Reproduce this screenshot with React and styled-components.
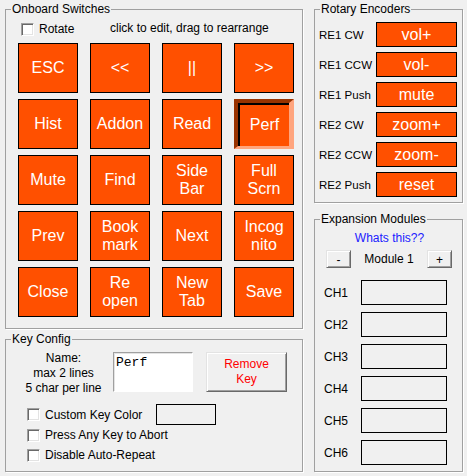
import React from "react";
import styled, { createGlobalStyle, css } from "styled-components";

const Global = createGlobalStyle`
  html, body { margin: 0; padding: 0; background: #f0f0f0; }
  body { font-family: "Liberation Sans", Arial, sans-serif; font-size: 12px; color: #000; }
  #root { width: 467px; height: 476px; overflow: hidden; }
  * { box-sizing: border-box; }
`;

const Page = styled.div`
  display: flex;
  gap: 11px;
  padding: 2px 0 0 5px;
`;

const Column = styled.div`
  display: flex;
  flex-direction: column;
  width: ${(p) => p.$width}px;
  gap: ${(p) => p.$gap}px;
`;

const Group = styled.fieldset`
  margin: 0;
  padding: 0;
  min-width: 0;
  border: 1px solid #a0a0a0;
  box-shadow: 1px 1px 0 #fff;
`;

const Legend = styled.legend`
  margin-left: 5px;
  padding: 0 1px;
  font-size: 12px;
  line-height: 14px;
`;

const SwitchBody = styled.div`
  padding: 3px 0 11px 12px;
`;

const TopRow = styled.div`
  display: grid;
  grid-template-columns: 92px auto;
  align-items: center;
  height: 20px;
`;

const CheckLabel = styled.label`
  display: flex;
  align-items: center;
  gap: 5px;
  padding-left: ${(p) => p.$indent || 0}px;
  height: ${(p) => p.$height || 20}px;
  white-space: nowrap;
`;

const Box = styled.span`
  width: 13px;
  height: 13px;
  flex: none;
  background: #fff;
  border: 1px solid;
  border-color: #a0a0a0 #fff #fff #a0a0a0;
  box-shadow: inset 1px 1px 0 #696969, inset -1px -1px 0 #e3e3e3;
`;

const Hint = styled.span`
  margin-top: -2px;
`;

const KeyGrid = styled.div`
  display: grid;
  grid-template-columns: repeat(4, 60px);
  grid-auto-rows: 50px;
  column-gap: 12px;
  row-gap: 6px;
  margin-top: 4px;
`;

const orange = "#ff5000";

const Key = styled.div`
  display: flex;
  align-items: center;
  justify-content: center;
  text-align: center;
  white-space: pre-line;
  background: ${orange};
  border: 1px solid #000;
  color: #fff;
  font-size: 16px;
  line-height: 18.5px;
  ${(p) =>
    p.$pressed &&
    css`
      border-width: 4px 5px 3px 4px;
      border-color: #993300 #ffa57e #ffa57e #993300;
      box-shadow: inset 2px 2px 0 #000;
      padding: 2px 0 0 2px;
    `}
`;

const ConfigBody = styled.div`
  padding: 6px 0 6px 8px;
`;

const ConfigRow = styled.div`
  display: flex;
  align-items: flex-start;
  height: 40px;
`;

const NameNote = styled.div`
  width: 99px;
  text-align: center;
  line-height: 15px;
  margin-top: -1px;
`;

const NameInput = styled.div`
  width: 80px;
  height: 40px;
  background: #fff;
  border: 1px solid;
  border-color: #a0a0a0 #fff #fff #a0a0a0;
  box-shadow: inset 1px 1px 0 #e3e3e3;
  font-family: "Liberation Mono", "Courier New", monospace;
  font-size: 13px;
  line-height: 15px;
  padding: 2px 0 0 2px;
  margin-right: 13px;
`;

const raised = css`
  background: #f0f0f0;
  border: 1px solid;
  border-color: #e3e3e3 #696969 #696969 #e3e3e3;
  box-shadow: inset 1px 1px 0 #fff, inset -1px -1px 0 #a0a0a0;
  display: flex;
  align-items: center;
  justify-content: center;
  text-align: center;
  font-family: inherit;
  padding: 0;
`;

const RemoveButton = styled.button`
  ${raised}
  width: 81px;
  height: 40px;
  color: #ff0000;
  font-size: 12px;
  line-height: 15px;
`;

const Checks = styled.div`
  margin-top: 12px;
  padding-left: 13px;
  display: flex;
  flex-direction: column;
`;

const ColorRow = styled.div`
  display: grid;
  grid-template-columns: 129px 60px;
  align-items: center;
  height: 21px;
`;

const Swatch = styled.div`
  width: 60px;
  height: 21px;
  border: 1px solid #000;
`;

const EncoderBody = styled.div`
  display: grid;
  grid-template-columns: 57px 81px;
  grid-auto-rows: 25px;
  row-gap: 5px;
  align-items: center;
  padding: 6px 0 5px 4px;
`;

const EncoderLabel = styled.span`
  font-size: 11.5px;
  white-space: nowrap;
`;

const EncoderKey = styled.div`
  height: 25px;
  background: ${orange};
  border: 1px solid #000;
  color: #fff;
  font-size: 16px;
  display: flex;
  align-items: center;
  justify-content: center;
`;

const ExpansionBody = styled.div`
  padding: 5px 0 6px 0;
`;

const Link = styled.div`
  text-align: center;
  color: #2020ff;
  line-height: 14px;
  padding-left: 2px;
`;

const ModuleRow = styled.div`
  display: grid;
  grid-template-columns: 25px 1fr 25px;
  align-items: center;
  margin: 5px 10px 0 11px;
  height: 18px;
`;

const SmallButton = styled.button`
  ${raised}
  width: 25px;
  height: 18px;
  font-size: 12px;
  color: #000;
  padding-top: 2px;
`;

const ModuleName = styled.span`
  text-align: center;
`;

const Channels = styled.div`
  display: grid;
  grid-template-columns: 37px 86px;
  grid-auto-rows: 25px;
  row-gap: 7px;
  align-items: center;
  margin-top: 12px;
  padding-left: 9px;
`;

const ChannelBox = styled.div`
  height: 25px;
  border: 1px solid #000;
`;

const keys = [
  "ESC", "<<", "||", ">>",
  "Hist", "Addon", "Read", "Perf",
  "Mute", "Find", "Side\nBar", "Full\nScrn",
  "Prev", "Book\nmark", "Next", "Incog\nnito",
  "Close", "Re\nopen", "New\nTab", "Save",
];

const encoders = [
  ["RE1 CW", "vol+"],
  ["RE1 CCW", "vol-"],
  ["RE1 Push", "mute"],
  ["RE2 CW", "zoom+"],
  ["RE2 CCW", "zoom-"],
  ["RE2 Push", "reset"],
];

export default function App() {
  return (
    <>
      <Global />
      <Page>
        <Column $width={298} $gap={3}>
          <Group>
            <Legend>Onboard Switches</Legend>
            <SwitchBody>
              <TopRow>
                <CheckLabel $indent={3}>
                  <Box />
                  Rotate
                </CheckLabel>
                <Hint>click to edit, drag to rearrange</Hint>
              </TopRow>
              <KeyGrid>
                {keys.map((k, i) => (
                  <Key key={i} $pressed={k === "Perf"}>
                    {k}
                  </Key>
                ))}
              </KeyGrid>
            </SwitchBody>
          </Group>
          <Group>
            <Legend>Key Config</Legend>
            <ConfigBody>
              <ConfigRow>
                <NameNote>
                  Name:
                  <br />
                  max 2 lines
                  <br />5 char per line
                </NameNote>
                <NameInput>Perf</NameInput>
                <RemoveButton>
                  Remove
                  <br />
                  Key
                </RemoveButton>
              </ConfigRow>
              <Checks>
                <ColorRow>
                  <CheckLabel $height={21}>
                    <Box />
                    Custom Key Color
                  </CheckLabel>
                  <Swatch />
                </ColorRow>
                <CheckLabel>
                  <Box />
                  Press Any Key to Abort
                </CheckLabel>
                <CheckLabel>
                  <Box />
                  Disable Auto-Repeat
                </CheckLabel>
              </Checks>
            </ConfigBody>
          </Group>
        </Column>
        <Column $width={149} $gap={9}>
          <Group>
            <Legend>Rotary Encoders</Legend>
            <EncoderBody>
              {encoders.map(([label, value]) => (
                <React.Fragment key={label}>
                  <EncoderLabel>{label}</EncoderLabel>
                  <EncoderKey>{value}</EncoderKey>
                </React.Fragment>
              ))}
            </EncoderBody>
          </Group>
          <Group>
            <Legend>Expansion Modules</Legend>
            <ExpansionBody>
              <Link>Whats this??</Link>
              <ModuleRow>
                <SmallButton>-</SmallButton>
                <ModuleName>Module 1</ModuleName>
                <SmallButton>+</SmallButton>
              </ModuleRow>
              <Channels>
                {[1, 2, 3, 4, 5, 6].map((n) => (
                  <React.Fragment key={n}>
                    <span>CH{n}</span>
                    <ChannelBox />
                  </React.Fragment>
                ))}
              </Channels>
            </ExpansionBody>
          </Group>
        </Column>
      </Page>
    </>
  );
}
